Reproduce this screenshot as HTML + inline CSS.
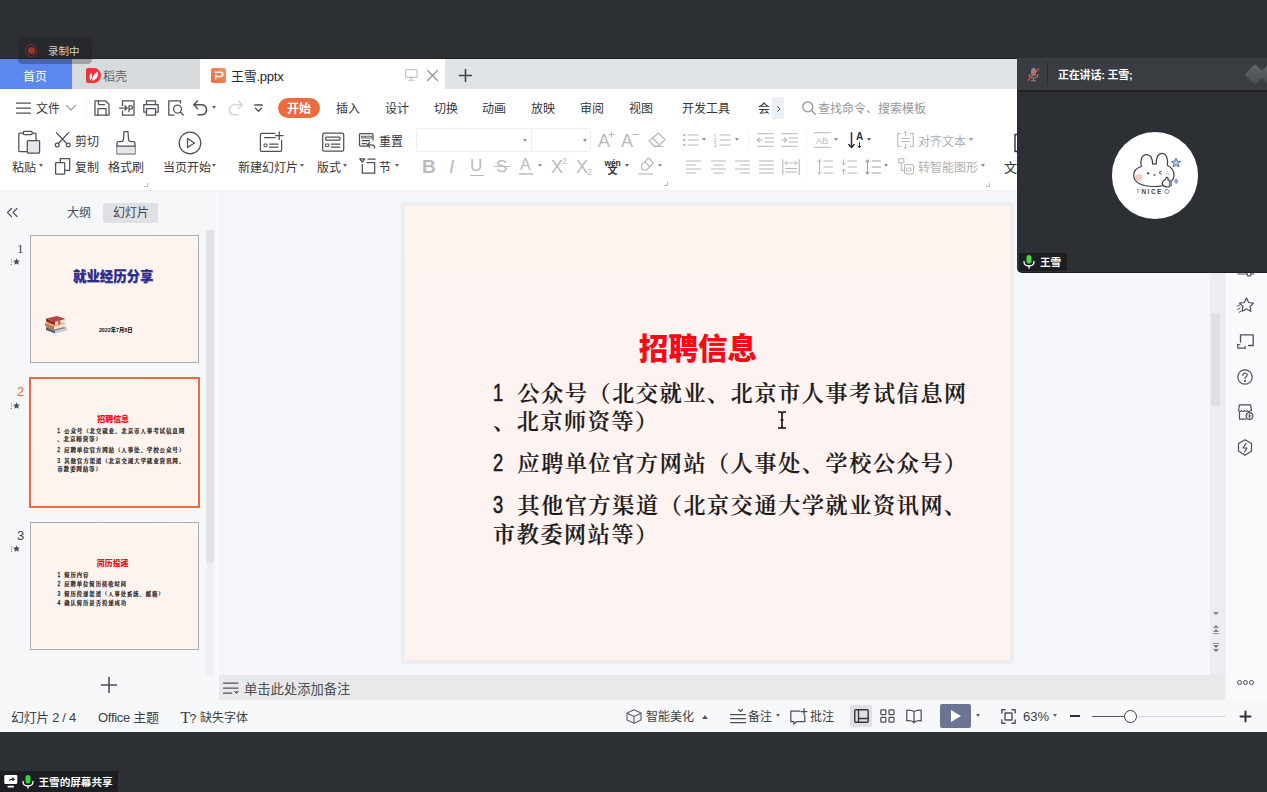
<!DOCTYPE html>
<html lang="zh-CN">
<head>
<meta charset="utf-8">
<title>王雪.pptx</title>
<style>
*{box-sizing:border-box;margin:0;padding:0}
html,body{width:1267px;height:792px;overflow:hidden;background:#2c2f33}
body{position:relative;font-family:"Liberation Sans","Noto Sans CJK SC",sans-serif;font-size:12px;color:#3b3f45}
.a{position:absolute}
.t{position:absolute;white-space:nowrap;line-height:20px;height:20px}
svg{position:absolute;overflow:visible}
.ic{fill:none;stroke:#4d5055;stroke-width:1.25;stroke-linecap:round;stroke-linejoin:round}
.ig{fill:none;stroke:#b6b8bc;stroke-width:1.1;stroke-linecap:round;stroke-linejoin:round}
.g{color:#a9abb0}
.kai{font-family:"Liberation Sans","Noto Serif CJK SC",serif;font-weight:700}
.body .n{display:inline-block;width:24.5px;font-family:"Liberation Sans",sans-serif;font-weight:400;letter-spacing:0;font-size:23.5px;line-height:20px;vertical-align:baseline;-webkit-text-stroke:.6px #1d1a1a;transform:scaleX(.78);transform-origin:0 50%}
.th .n{-webkit-text-stroke:.9px #1d1a1a}
</style>
</head>
<body>

<!-- window base -->
<div class="a" style="left:0;top:59px;width:1267px;height:673px;background:#f6f7fa"></div>
<!-- tab bar -->
<div class="a" style="left:0;top:58px;width:1267px;height:1.500px;background:#222427"></div>
<div class="a" style="left:0;top:59px;width:1267px;height:30px;background:#e1e4e7"></div>
<div class="a" style="left:0;top:59px;width:72px;height:30px;background:#5b87ef"></div>
<div class="a" style="left:72px;top:59px;width:128px;height:30px;background:#d8dbde"></div>
<div class="a" style="left:200px;top:59px;width:245px;height:30px;background:#fff"></div>
<!-- menu + ribbon bg -->
<div class="a" style="left:0;top:89px;width:1267px;height:101px;background:#fff"></div>
<div class="a" style="left:0;top:190px;width:1267px;height:2px;background:linear-gradient(#ecedf0,#f5f6f9)"></div>

<div class="t" style="left:23px;top:66.5px;font-size:12px;color:#fff;">首页</div>
<svg style="left:86px;top:68px" width="15" height="15" viewBox="0 0 15 15"><path d="M2 0h6a7 7.500 0 0 1 0 15h-6a2 2 0 0 1-2-2v-11a2 2 0 0 1 2-2z" fill="#f3303b"/><path d="M4.400 12.600c-1.500-3-.8-5.800.8-7.800c1.300 2.400 1.200 5.200-.8 7.800zM6.200 12.800c-.2-3.800 2-7.400 5.800-9.400c.6 4.600-1.500 8.300-5.800 9.400z" fill="#fff"/></svg>
<div class="t" style="left:103px;top:66.5px;font-size:12px;color:#5d6168;">稻壳</div>
<svg style="left:211px;top:68px" width="15" height="15" viewBox="0 0 15 15"><defs><linearGradient id="pg" x1="0" y1="1" x2="1" y2="0"><stop offset="0" stop-color="#ec6a3a"/><stop offset="1" stop-color="#f39566"/></linearGradient></defs><rect width="15" height="15" rx="2" fill="url(#pg)"/><path d="M3.500 4.200h6.200q2 0 2 2.100t-2 2.100h-5M4.700 6.200v5.300" fill="none" stroke="#fff" stroke-width="1.500"/></svg>
<div class="t" style="left:231px;top:66.5px;font-size:13px;color:#25282c;letter-spacing:-.25px;">王雪.pptx</div>
<svg class="ig" style="left:405px;top:69px;stroke:#b9c3cf" width="13" height="12" viewBox="0 0 13 12"><rect x=".6" y=".6" width="11.500" height="7.800" rx="1"/><path d="M6.300 8.500v2.500M3.500 11.200h5.600"/></svg>
<svg class="ic" style="left:427px;top:70px;stroke:#8d9299;stroke-width:1.200" width="11" height="11" viewBox="0 0 11 11"><path d="M.5 .5l10 10M10.500 .5l-10 10"/></svg>
<svg class="ic" style="left:459px;top:69px;stroke:#3f4247;stroke-width:1.600" width="13" height="13" viewBox="0 0 13 13"><path d="M6.500 .5v12M.5 6.500h12"/></svg>
<svg class="ic" style="left:16px;top:102px" width="15" height="12" viewBox="0 0 15 12"><path d="M.5 1h14M.5 6h14M.5 11h14"/></svg>
<div class="t" style="left:36px;top:99px;font-size:12px;color:#33363b;">文件</div>
<svg class="ic" style="left:66px;top:105px;stroke:#9a9da2;stroke-width:1.100" width="10" height="6" viewBox="0 0 10 6"><path d="M.5 .5l4.500 4.500l4.500-4.500"/></svg>
<div class="a" style="left:86px;top:97px;width:1px;height:22px;background:#f3f4f6"></div>
<svg class="ic" style="left:94px;top:100px" width="16" height="16" viewBox="0 0 16 16"><path d="M1 .8h10.500l3.500 3.500v10.900h-14z"/><path d="M4 15v-6.500h8v6.500M4.500 1v3.500h6"/></svg>
<svg class="ic" style="left:119px;top:100px" width="16" height="16" viewBox="0 0 16 16"><path d="M3.500 5.500v-4.700h11.500v14.400h-11.500v-4"/><path d="M.5 8h7.500M5.800 5.800l2.400 2.200l-2.400 2.200"/><path d="M10 11.800v-6h1.700q1.800 0 1.800 1.700t-1.800 1.700h-1.700"/></svg>
<svg class="ic" style="left:143px;top:100px" width="16" height="16" viewBox="0 0 16 16"><path d="M3.500 4.500v-3.700h9v3.700"/><path d="M3.500 12h-2.700v-7.500h14.400v7.500h-2.700"/><path d="M3.500 8.500h9v6.700h-9z"/></svg>
<svg class="ic" style="left:168px;top:100px" width="16" height="16" viewBox="0 0 16 16"><path d="M12.500 3v-2.200h-11.700v14.400h5.200"/><circle cx="9.500" cy="9" r="4"/><path d="M12.500 12l2.700 3"/></svg>
<svg class="ic" style="left:193px;top:100px;stroke-width:1.500" width="15" height="16" viewBox="0 0 15 16"><path d="M4.500 1l-3.700 3.800l3.700 3.800"/><path d="M1.500 4.800h6.500q5.500 0 5.500 5t-5.500 5h-3"/></svg>
<div class="a" style="left:211.5px;top:106px;width:0;height:0;border-left:2.5px solid transparent;border-right:2.5px solid transparent;border-top:3px solid #62656a"></div>
<svg class="ig" style="left:228px;top:100px;stroke:#c4c6ca" width="15" height="16" viewBox="0 0 15 16"><path d="M10.500 1l3.700 3.800l-3.700 3.800"/><path d="M13.500 4.800h-6.500q-5.500 0-5.500 5t5.500 5h3"/></svg>
<svg class="ic" style="left:253.5px;top:103.5px;stroke-width:1.300" width="9" height="9" viewBox="0 0 9 9"><path d="M.8 1h7.400M1.500 4.300l3 3l3-3"/></svg>
<div class="a" style="left:270px;top:97px;width:1px;height:22px;background:#f3f4f6"></div>
<div class="a" style="left:278px;top:98px;width:42px;height:20px;border-radius:10px;background:#ec6b3f"></div>
<div class="t" style="left:287px;top:99px;font-size:12px;color:#fff;font-weight:700;">开始</div>
<div class="t" style="left:336px;top:99px;font-size:12px;color:#33363b;">插入</div>
<div class="t" style="left:385px;top:99px;font-size:12px;color:#33363b;">设计</div>
<div class="t" style="left:434px;top:99px;font-size:12px;color:#33363b;">切换</div>
<div class="t" style="left:482px;top:99px;font-size:12px;color:#33363b;">动画</div>
<div class="t" style="left:531px;top:99px;font-size:12px;color:#33363b;">放映</div>
<div class="t" style="left:580px;top:99px;font-size:12px;color:#33363b;">审阅</div>
<div class="t" style="left:629px;top:99px;font-size:12px;color:#33363b;">视图</div>
<div class="t" style="left:682px;top:99px;font-size:12px;color:#33363b;">开发工具</div>
<div class="t" style="left:758px;top:99px;font-size:12px;color:#33363b;">会</div>
<div class="a" style="left:772px;top:97px;width:12px;height:22px;background:#eeeff2"></div>
<svg class="ic" style="left:776.5px;top:105.5px;stroke-width:1" width="3" height="6" viewBox="0 0 3 6"><path d="M.5 .5l2.500 2.500l-2.500 2.500"/></svg>
<svg class="ic" style="left:802px;top:101px;stroke:#8b8e94;stroke-width:1.200" width="14" height="14" viewBox="0 0 14 14"><circle cx="5.800" cy="5.800" r="5"/><path d="M9.500 9.500l3.800 3.800"/></svg>
<div class="t" style="left:818px;top:99px;font-size:12px;color:#94979d;">查找命令、搜索模板</div>
<svg class="ic" style="left:18px;top:129px" width="23" height="26" viewBox="0 0 23 26"><path d="M5.300 4h-3.500q-1 0-1 1v16.500q0 1 1 1h7"/><path d="M14.200 4h2.800q1 0 1 1v6"/><rect x="5.300" y="2.400" width="8.900" height="3.200" rx="1" fill="#fff"/><rect x="9.300" y="11.500" width="12.300" height="12.700" rx="1" fill="#e6e7ea"/></svg>
<div class="t" style="left:12px;top:158px;font-size:12px;color:#33363b;">粘贴</div>
<div class="a" style="left:39px;top:163.5px;width:0;height:0;border-left:2.5px solid transparent;border-right:2.5px solid transparent;border-top:3px solid #62656a"></div>
<svg class="ic" style="left:54px;top:131px" width="18" height="17" viewBox="0 0 18 17"><path d="M2.400 1.600l10.200 10.900M14.600 1.600l-10.200 10.900"/><circle cx="3.200" cy="14" r="1.900"/><circle cx="14.300" cy="14" r="1.900"/></svg>
<div class="t" style="left:75px;top:132px;font-size:12px;color:#33363b;">剪切</div>
<svg class="ic" style="left:55px;top:158px" width="16" height="17" viewBox="0 0 16 17"><path d="M5.300 4.600v-3.900h9.400v11.600h-5"/><rect x=".6" y="4.600" width="9.100" height="11.600" rx=".8" fill="#fff"/></svg>
<div class="t" style="left:75px;top:158px;font-size:12px;color:#33363b;">复制</div>
<svg class="ic" style="left:116px;top:131px" width="20" height="24" viewBox="0 0 20 24"><path d="M8 .7h4l.5 7.500q.2 2.400 2.500 2.400h2.400q1.600 0 1.600 1.600v10.600h-18v-10.600q0-1.600 1.600-1.600h2.400q2.300 0 2.500-2.400z"/><path d="M1.200 15h17.600v7.500h-17.600z" fill="#e6e7ea" stroke="none"/><path d="M1 15h18"/></svg>
<div class="t" style="left:108px;top:158px;font-size:12px;color:#33363b;">格式刷</div>
<svg class="ig" style="left:144px;top:183px;stroke-width:1" width="4" height="4" viewBox="0 0 4 4"><path d="M3.500 .5v3h-3"/></svg>
<svg class="ic" style="left:178px;top:131px" width="24" height="24" viewBox="0 0 24 24"><circle cx="12" cy="12" r="10.800"/><path d="M9.500 7.500v9l7-4.500z"/></svg>
<div class="t" style="left:163px;top:158px;font-size:12px;color:#33363b;">当页开始</div>
<div class="a" style="left:212px;top:163.5px;width:0;height:0;border-left:2.5px solid transparent;border-right:2.5px solid transparent;border-top:3px solid #62656a"></div>
<svg class="ic" style="left:260px;top:131px" width="25" height="21" viewBox="0 0 25 21"><path d="M15 2.300h-13.600q-1 0-1 1v16q0 1 1 1h19.200q1 0 1-1v-10"/><path d="M4.500 6.600h10.500M9.600 13h8.400M9.600 16.200h8.400"/><rect x="4.500" y="13" width="2.500" height="2.700" stroke-width="1"/><path d="M19.300 .9v7.600M15.500 4.700h7.600"/></svg>
<div class="t" style="left:238px;top:158px;font-size:12px;color:#33363b;">新建幻灯片</div>
<div class="a" style="left:299.5px;top:163.5px;width:0;height:0;border-left:2.5px solid transparent;border-right:2.5px solid transparent;border-top:3px solid #62656a"></div>
<svg class="ic" style="left:322px;top:132px" width="23" height="20" viewBox="0 0 23 20"><rect x=".7" y="1.200" width="21" height="18" rx="1.500"/><rect x="3.800" y="5" width="14.100" height="3.200" rx=".6"/><rect x="3.800" y="12" width="3" height="2.700" stroke-width="1"/><path d="M9.400 12h8.500M9.400 15.200h8.500"/></svg>
<div class="t" style="left:317px;top:158px;font-size:12px;color:#33363b;">版式</div>
<div class="a" style="left:343px;top:163.5px;width:0;height:0;border-left:2.5px solid transparent;border-right:2.5px solid transparent;border-top:3px solid #62656a"></div>
<svg class="ic" style="left:359px;top:133px" width="17" height="16" viewBox="0 0 17 16"><path d="M8.500 13h-7q-1 0-1-1v-10.500q0-1 1-1h11.500q1 0 1 1v5.500"/><rect x="3" y="3.200" width="2.300" height="1.800" stroke-width=".9"/><rect x="6.800" y="3.200" width="6" height="1.800" stroke-width=".9"/><path d="M3 7.600h7.500M3 10.500h4.300"/><path d="M8.500 11.800h4q3.200 0 3.200 3.200M10.800 9.400l-2.500 2.400l2.500 2.400"/></svg>
<div class="t" style="left:379px;top:132px;font-size:12px;color:#33363b;">重置</div>
<svg class="ic" style="left:359px;top:158px" width="17" height="16" viewBox="0 0 17 16"><path d="M.8 .8h5l-2.500 3.200z"/><path d="M3.300 6.500v8.700h12.400v-10.700h-7.700"/><path d="M9 1.200h7"/></svg>
<div class="t" style="left:379px;top:158px;font-size:12px;color:#33363b;">节</div>
<div class="a" style="left:394.5px;top:163.5px;width:0;height:0;border-left:2.5px solid transparent;border-right:2.5px solid transparent;border-top:3px solid #62656a"></div>
<div class="a" style="left:416px;top:128px;width:175px;height:24px;border:1px solid #eceef2;border-radius:2px"></div>
<div class="a" style="left:531px;top:128px;width:1px;height:24px;background:#eceef2"></div>
<div class="a" style="left:523px;top:139px;width:0;height:0;border-left:2.5px solid transparent;border-right:2.5px solid transparent;border-top:3px solid #8d9095"></div>
<div class="a" style="left:583px;top:139px;width:0;height:0;border-left:2.5px solid transparent;border-right:2.5px solid transparent;border-top:3px solid #8d9095"></div>
<div class="t" style="left:598px;top:131px;font-size:18px;color:#b9bbbf;font-weight:400;">A</div>
<svg class="ig" style="left:609px;top:132px;stroke-width:1" width="5" height="5" viewBox="0 0 5 5"><path d="M2.500 0v5M0 2.500h5"/></svg>
<div class="t" style="left:621px;top:131px;font-size:18px;color:#b9bbbf;">A</div>
<svg class="ig" style="left:633px;top:132px;stroke-width:1" width="5" height="5" viewBox="0 0 5 5"><path d="M0 2.500h5"/></svg>
<svg class="ig" style="left:648px;top:132px" width="18" height="16" viewBox="0 0 18 16"><path d="M10.500 1l6.500 6.500l-6.500 6.500h-4.500l-5-5z"/><path d="M4.500 6l6 6M6 14.500h9"/></svg>
<div class="t" style="left:422px;top:157px;font-size:19px;color:#b9bbbf;font-weight:700;">B</div>
<div class="t" style="left:449px;top:157px;font-size:19px;color:#b9bbbf;font-style:italic;">I</div>
<div class="t" style="left:470px;top:156px;font-size:17px;color:#b9bbbf;">U</div>
<div class="a" style="left:470px;top:175px;width:14px;height:1px;background:#b7b9bd"></div>
<svg class="ig" style="left:496px;top:159px;display:none" width="13" height="15" viewBox="0 0 13 15"><path d="M12 1h-8q-3 0-3 3t3 3h8.500M1 14h8q3 0 3-3t-3-3"/></svg>
<div class="t" style="left:496px;top:157px;font-size:17px;color:#b9bbbf;">S</div>
<div class="a" style="left:494px;top:166px;width:16px;height:1px;background:#b7b9bd"></div>
<div class="t" style="left:520px;top:155px;font-size:16px;color:#b9bbbf;">A</div>
<div class="a" style="left:519px;top:173px;width:14px;height:2px;background:#c9cbce"></div>
<div class="a" style="left:537.5px;top:164px;width:0;height:0;border-left:2.5px solid transparent;border-right:2.5px solid transparent;border-top:3px solid #8d9095"></div>
<div class="t" style="left:551px;top:157px;font-size:18px;color:#b9bbbf;">X</div>
<div class="t" style="left:562px;top:151px;font-size:9px;color:#b9bbbf;">2</div>
<div class="t" style="left:576px;top:157px;font-size:18px;color:#b9bbbf;">X</div>
<div class="t" style="left:587px;top:162px;font-size:9px;color:#b9bbbf;">2</div>
<div class="t" style="left:604.5px;top:153px;font-size:8.5px;color:#2e3136;font-weight:700;letter-spacing:-.2px;">wén</div>
<div class="t" style="left:607.5px;top:161px;font-size:10px;color:#2e3136;font-weight:700;">文</div>
<div class="a" style="left:624.5px;top:164px;width:0;height:0;border-left:2.5px solid transparent;border-right:2.5px solid transparent;border-top:3px solid #62656a"></div>
<svg class="ig" style="left:639px;top:157px" width="16" height="18" viewBox="0 0 16 18"><path d="M9.500 1l5 5l-7 7h-3.500l-1.500-1.500v-3.500z"/><path d="M6 5l4.500 4.500"/></svg>
<div class="a" style="left:638px;top:173px;width:15px;height:2px;background:#d4d5d8"></div>
<div class="a" style="left:657.5px;top:164px;width:0;height:0;border-left:2.5px solid transparent;border-right:2.5px solid transparent;border-top:3px solid #8d9095"></div>
<svg class="ig" style="left:664px;top:182px;stroke-width:1" width="4" height="4" viewBox="0 0 4 4"><path d="M3.500 .5v3h-3"/></svg>
<svg class="ig" style="left:683px;top:133px" width="16" height="14" viewBox="0 0 16 14"><path d="M5 2h10.500M5 7h10.500M5 12h10.500"/><circle cx="1.300" cy="2" r=".8"/><circle cx="1.300" cy="7" r=".8"/><circle cx="1.300" cy="12" r=".8"/></svg>
<div class="a" style="left:701.5px;top:138px;width:0;height:0;border-left:2.5px solid transparent;border-right:2.5px solid transparent;border-top:3px solid #8d9095"></div>
<svg class="ig" style="left:714px;top:133px" width="17" height="14" viewBox="0 0 17 14"><path d="M6 2h10.500M6 7h10.500M6 12h10.500"/><path d="M1 .5v3M.5 6h1.500l-1.500 2.500h1.500M.5 10.500h1.500v3h-1.500" stroke-width=".8"/></svg>
<div class="a" style="left:734.5px;top:138px;width:0;height:0;border-left:2.5px solid transparent;border-right:2.5px solid transparent;border-top:3px solid #8d9095"></div>
<div class="a" style="left:748px;top:130px;width:1px;height:20px;background:#f1f2f4"></div>
<svg class="ig" style="left:757px;top:133px" width="17" height="14" viewBox="0 0 17 14"><path d="M.5 .8h16M8 5h8.500M8 9h8.500M.5 13.200h16"/><path d="M5.500 7h-5M2.500 5l-2 2l2 2"/></svg>
<svg class="ig" style="left:781px;top:133px" width="17" height="14" viewBox="0 0 17 14"><path d="M.5 .8h16M8 5h8.500M8 9h8.500M.5 13.200h16"/><path d="M.5 7h5M3.500 5l2 2l-2 2"/></svg>
<div class="a" style="left:806px;top:130px;width:1px;height:20px;background:#f1f2f4"></div>
<svg class="ig" style="left:814px;top:132px" width="17" height="16" viewBox="0 0 17 16"><path d="M.5 .8h16M.5 15.200h16"/></svg>
<div class="t" style="left:816px;top:130.5px;font-size:9px;color:#b9bbbf;">AB</div>
<div class="a" style="left:833.5px;top:138px;width:0;height:0;border-left:2.5px solid transparent;border-right:2.5px solid transparent;border-top:3px solid #8d9095"></div>
<svg class="ic" style="left:848px;top:132px;stroke:#2e3136;stroke-width:1.500" width="15" height="17" viewBox="0 0 15 17"><path d="M3.500 .8v14.500M.8 12.500l2.700 3l2.700-3"/><path d="M11.500 10.500v5M10 14l1.500 1.800l1.500-1.800" stroke-width="1"/></svg>
<div class="t" style="left:856px;top:127px;font-size:10px;color:#2e3136;font-weight:700;">A</div>
<div class="a" style="left:866.5px;top:138px;width:0;height:0;border-left:2.5px solid transparent;border-right:2.5px solid transparent;border-top:3px solid #62656a"></div>
<svg class="ig" style="left:897px;top:131px" width="17" height="18" viewBox="0 0 17 18"><path d="M3.500 2.500h-2.700v13h2.700M13.500 2.500h2.700v13h-2.700"/><path d="M4.500 7.500h8M4.500 10.500h8"/><path d="M8.500 .5v4.500M7 2l1.500-1.500l1.500 1.500M8.500 17.500v-4.500M7 16l1.500 1.500l1.500-1.500" stroke-width=".9"/></svg>
<div class="t" style="left:918px;top:132px;font-size:12px;color:#aeb0b4;">对齐文本</div>
<div class="a" style="left:968.5px;top:138px;width:0;height:0;border-left:2.5px solid transparent;border-right:2.5px solid transparent;border-top:3px solid #8d9095"></div>
<svg class="ig" style="left:686px;top:160px" width="15" height="14" viewBox="0 0 15 14"><path d="M.5 1h14M.5 5h9M.5 9h14M.5 13h9"/></svg>
<svg class="ig" style="left:711px;top:160px" width="15" height="14" viewBox="0 0 15 14"><path d="M.5 1h14M3 5h9M.5 9h14M3 13h9"/></svg>
<svg class="ig" style="left:735px;top:160px" width="15" height="14" viewBox="0 0 15 14"><path d="M.5 1h14M5.500 5h9M.5 9h14M5.500 13h9"/></svg>
<svg class="ig" style="left:759px;top:160px" width="15" height="14" viewBox="0 0 15 14"><path d="M.5 1h14M.5 5h14M.5 9h14M.5 13h14"/></svg>
<svg class="ig" style="left:782px;top:159px" width="18" height="16" viewBox="0 0 18 16"><path d="M.8 .5v15M17.200 .5v15M3.500 9.500h11M3.500 13h11"/><path d="M3 4h12M5 2l-2 2l2 2M13 2l2 2l-2 2" stroke-width=".9"/></svg>
<div class="a" style="left:806px;top:157px;width:1px;height:20px;background:#f1f2f4"></div>
<svg class="ig" style="left:817px;top:159px" width="16" height="16" viewBox="0 0 16 16"><path d="M7 2h8.500M7 8h8.500M7 14h8.500"/><path d="M2.500 .8v14.400M.8 2.800l1.700-2l1.700 2M.8 13.200l1.700 2l1.700-2" stroke-width="1"/></svg>
<svg class="ig" style="left:841px;top:159px" width="16" height="16" viewBox="0 0 16 16"><path d="M7 2h8.500M7 8h8.500M7 14h8.500"/><path d="M2.500 .8v5M.8 4l1.700 2l1.700-2M2.500 15.200v-5M.8 12l1.700-2l1.700 2" stroke-width="1"/></svg>
<svg class="ig" style="left:865px;top:159px;stroke:#9fa2a7" width="16" height="16" viewBox="0 0 16 16"><path d="M7 2h8.500M7 8h8.500M7 14h8.500"/><path d="M2.500 .8v14.400M.8 2.800l1.700-2l1.700 2M.8 13.200l1.700 2l1.700-2" stroke-width="1.100"/></svg>
<div class="a" style="left:883.5px;top:164px;width:0;height:0;border-left:2.5px solid transparent;border-right:2.5px solid transparent;border-top:3px solid #8d9095"></div>
<svg class="ig" style="left:898px;top:158px" width="16" height="17" viewBox="0 0 16 17"><path d="M.8 .8h5v4h-5zM3.300 5v7.500h2.500"/><rect x="6.500" y="6.500" width="9" height="9.500" rx="1.500"/><path d="M9 10h4v3h-4z" stroke-width=".9"/></svg>
<div class="t" style="left:918px;top:158px;font-size:12px;color:#aeb0b4;">转智能图形</div>
<div class="a" style="left:980.5px;top:164px;width:0;height:0;border-left:2.5px solid transparent;border-right:2.5px solid transparent;border-top:3px solid #8d9095"></div>
<div class="t" style="left:1004px;top:158px;font-size:13px;color:#2e3136;">文</div>
<svg class="ic" style="left:1013.5px;top:133.5px;stroke:#2e3136;stroke-width:1.400" width="4" height="18" viewBox="0 0 4 18"><path d="M3.500 .5h-2.500v17h2.500"/></svg>
<svg class="ig" style="left:986px;top:183px;stroke-width:1" width="4" height="4" viewBox="0 0 4 4"><path d="M3.500 .5v3h-3"/></svg>
<!-- left panel -->
<div class="a" style="left:0;top:192px;width:218px;height:508px;background:#f6f7f9"></div>
<div class="a" style="left:217px;top:192px;width:1px;height:508px;background:#fdfdfe"></div>
<svg class="ic" style="left:7px;top:208px;stroke-width:1.200" width="11" height="9" viewBox="0 0 11 9"><path d="M4.500 .5l-4 4l4 4M10 .5l-4 4l4 4"/></svg>
<div class="t" style="left:67px;top:203px;font-size:12px;color:#4a4d52;">大纲</div>
<div class="a" style="left:103px;top:203px;width:55px;height:20px;background:#dfe1e5;border-radius:2px"></div>
<div class="t" style="left:113px;top:203px;font-size:12px;color:#3f4247;">幻灯片</div>
<div class="a" style="left:206px;top:230px;width:8px;height:446px;background:#eff0f3"></div>
<div class="a" style="left:206px;top:230px;width:8px;height:333px;background:#e2e3e7;border-radius:2px"></div>
<div class="t" style="left:17px;top:239px;font-size:13px;color:#3f4247;font-family:'Liberation Serif',serif;">1</div>
<div class="t" style="left:17px;top:382px;font-size:13px;color:#e8693f;">2</div>
<div class="t" style="left:17px;top:526px;font-size:13px;color:#3f4247;">3</div>
<svg style="left:11px;top:258px" width="9" height="8" viewBox="0 0 9 8"><path d="M5.500 .3l1 2.300l2.400.2l-1.800 1.600l.6 2.400l-2.200-1.300l-2.200 1.300l.6-2.400l-1.800-1.600l2.400-.2z" fill="#4a4d52"/><path d="M.5 1.500v1M.5 3.800v1M.5 6v1" stroke="#4a4d52" stroke-width=".8"/></svg>
<svg style="left:11px;top:402px" width="9" height="8" viewBox="0 0 9 8"><path d="M5.500 .3l1 2.300l2.400.2l-1.800 1.600l.6 2.400l-2.200-1.300l-2.200 1.300l.6-2.400l-1.800-1.600l2.400-.2z" fill="#4a4d52"/><path d="M.5 1.500v1M.5 3.800v1M.5 6v1" stroke="#4a4d52" stroke-width=".8"/></svg>
<svg style="left:11px;top:545px" width="9" height="8" viewBox="0 0 9 8"><path d="M5.500 .3l1 2.300l2.400.2l-1.800 1.600l.6 2.400l-2.200-1.300l-2.200 1.300l.6-2.400l-1.800-1.600l2.400-.2z" fill="#4a4d52"/><path d="M.5 1.500v1M.5 3.800v1M.5 6v1" stroke="#4a4d52" stroke-width=".8"/></svg>
<div class="a" style="left:30px;top:235px;width:169px;height:128px;border:1px solid #aaaeb4;background:linear-gradient(160deg,#fff7ee,#fdf4f0 40%);overflow:hidden"><div style="position:absolute;left:0;top:0;width:605px;height:454px;transform:scale(0.2786);transform-origin:0 0"><div style="position:absolute;left:0;top:112px;width:590px;text-align:center;font-size:48px;line-height:70px;font-weight:900;color:#2b2b8e;text-shadow:2px 2px 2px rgba(60,60,120,.45)">就业经历分享</div><div style="position:absolute;left:204px;top:322px;width:200px;text-align:center;font-size:19px;line-height:30px;font-weight:900;color:#111">2022年7月8日</div></div></div>
<svg style="left:43px;top:315px" width="26" height="19" viewBox="0 0 26 19"><path d="M3 12l12-2l9 3l-12 3z" fill="#7f8790"/><path d="M3 12v3l9 3.500v-2.500z" fill="#596069"/><path d="M12 16l12-3v2.500l-12 3z" fill="#c9ccd0"/><path d="M2 8l12-2.500l9 3l-12 3z" fill="#e9a25a"/><path d="M2 8v3l9 3.500v-3z" fill="#c47b3a"/><path d="M11 11.500l12-3v3l-12 3z" fill="#f3e3c8"/><path d="M3 3.500l11-2.500l9 3l-11 3z" fill="#b8463f"/><path d="M3 3.500v3.200l9 3.300v-3z" fill="#8e2f2b"/><path d="M12 7l11-3v3l-11 3z" fill="#f0e6d8"/><path d="M15 6.200l2.500-.7v4l-1.200-.8l-1.300 1.500z" fill="#e04a4a"/></svg>
<div class="a" style="left:29px;top:377px;width:171px;height:131px;border:2px solid #ee6a3f;background:linear-gradient(160deg,#fff7ee,#fdf4f0 40%);overflow:hidden"><div style="position:absolute;left:0;top:0;width:605px;height:454px;transform:scale(0.2786);transform-origin:0 0"><div style="position:absolute;left:2px;top:3px"><div style="position:absolute;left:193px;top:122px;width:200px;height:40px;line-height:40px;text-align:center;font-size:28.500px;font-weight:900;color:#f50b16">招聘信息</div><div class="kai body th" style="position:absolute;left:92px;top:170px;color:#1d1a1a;font-size:20px;letter-spacing:2.870px;line-height:28.5px;white-space:nowrap;-webkit-text-stroke:.6px #1d1a1a"><div><span class="n">1</span>公众号（北交就业、北京市人事考试信息网</div><div>、北京师资等）</div><div style="margin-top:11px"><span class="n">2</span>应聘单位官方网站（人事处、学校公众号）</div><div style="margin-top:11px"><span class="n">3</span>其他官方渠道（北京交通大学就业资讯网、</div><div>市教委网站等）</div></div></div></div></div>
<div class="a" style="left:30px;top:522px;width:169px;height:128px;border:1px solid #aaaeb4;background:linear-gradient(160deg,#fff7ee,#fdf4f0 40%);overflow:hidden"><div style="position:absolute;left:0;top:0;width:605px;height:454px;transform:scale(0.2786);transform-origin:0 0"><div style="position:absolute;left:193px;top:126px;width:200px;height:40px;line-height:40px;text-align:center;font-size:28.500px;font-weight:900;color:#f50b16">简历投递</div><div class="kai body th" style="position:absolute;left:95px;top:170px;color:#1d1a1a;font-size:19px;letter-spacing:3.500px;line-height:34px;white-space:nowrap;-webkit-text-stroke:.6px #1d1a1a"><div><span class="n">1</span>简历内容</div><div><span class="n">2</span>应聘单位简历接收时间</div><div><span class="n">3</span>简历投递渠道（人事处系统、邮箱）</div><div><span class="n">4</span>确认简历是否投递成功</div></div></div></div>
<svg class="ic" style="left:101px;top:676.5px;stroke-width:1.600" width="16" height="16" viewBox="0 0 16 16"><path d="M8 .5v15M.5 8h15"/></svg>

<!-- main slide -->
<div class="a" style="left:402px;top:203px;width:611px;height:460px;background:linear-gradient(#fef6ef,#fdf4f1 15%);border:3px solid #ededee;box-shadow:0 0 2px rgba(0,0,0,.12)"></div>
<div class="t" style="left:598px;top:328.5px;width:200px;height:40px;line-height:40px;text-align:center;font-size:29.6px;font-weight:900;color:#f50b16">招聘信息</div>
<div class="kai body" style="font-weight:600;position:absolute;left:493px;top:379.5px;width:500px;color:#1d1a1a;font-size:22px;letter-spacing:1.7px;-webkit-text-stroke:.2px #1d1a1a;line-height:28.6px;white-space:nowrap">
<div><span class="n">1</span>公众号（北交就业、北京市人事考试信息网</div>
<div>、北京师资等）</div>
<div style="margin-top:13.4px"><span class="n">2</span>应聘单位官方网站（人事处、学校公众号）</div>
<div style="margin-top:13.4px"><span class="n">3</span>其他官方渠道（北京交通大学就业资讯网、</div>
<div>市教委网站等）</div>
</div>
<svg style="left:777px;top:410.500px" width="10" height="18" viewBox="0 0 10 18"><path d="M1 1h2.500q1.500 0 1.500 1.500v13q0 1.500-1.500 1.500h-2.500M9 1h-2.500q-1.500 0-1.500 1.500v13q0 1.500 1.500 1.500h2.500M3.500 9h3" fill="none" stroke="#111" stroke-width="1.600"/></svg>

<!-- notes bar -->
<div class="a" style="left:219px;top:675px;width:1006px;height:25px;background:#e8e9eb"></div>
<svg class="ic" style="left:223px;top:682px" width="16" height="12" viewBox="0 0 16 12"><path d="M.5 1h14.500M.5 6h14.500M.5 11h8"/><path d="M11.500 9.500l2 2l2-2" fill="#4a4d52" stroke-width=".8"/></svg>
<div class="t" style="left:244px;top:680px;font-size:13.3px;color:#4a4d52;">单击此处添加备注</div>
<div class="a" style="left:1210px;top:192px;width:15px;height:483px;background:#ecedf0"></div>
<div class="a" style="left:1211px;top:313px;width:9px;height:93px;background:#dfe0e4;border-radius:3px"></div>
<div class="a" style="left:1213px;top:612px;width:0;height:0;border-left:3px solid transparent;border-right:3px solid transparent;border-top:3px solid #7d8086"></div>
<svg style="left:1212px;top:625px" width="8" height="9" viewBox="0 0 8 9"><path d="M4 0l3 3h-6zM4 4l3 3h-6z" fill="#7d8086"/><path d="M1 8.500h6" stroke="#7d8086" stroke-width=".8"/></svg>
<svg style="left:1212px;top:643px" width="8" height="9" viewBox="0 0 8 9"><path d="M4 9l3-3h-6zM4 5l3-3h-6z" fill="#7d8086"/><path d="M1 .5h6" stroke="#7d8086" stroke-width=".8"/></svg>
<div class="a" style="left:1225px;top:190px;width:42px;height:510px;background:#f9fafb"></div>
<div class="a" style="left:1225px;top:190px;width:1px;height:510px;background:#f0f1f3"></div>
<svg class="ic" style="left:1238px;top:270.8px;stroke-width:1.100" width="16" height="6" viewBox="0 0 16 6"><path d="M0 3h9M13 3h3"/><circle cx="11" cy="3" r="2"/></svg>
<svg class="ic" style="left:1237px;top:297px;stroke-width:1.200" width="17" height="16" viewBox="0 0 17 16"><path d="M9.500 1l2.200 4.500l4.800.6l-3.500 3.400l.9 4.800l-4.400-2.300l-4.400 2.300l.9-4.800l-3.500-3.400l4.800-.6z"/><path d="M.5 9l2-1M.5 12.500l2.500-1.500M2 15.500l2-1.500" stroke-width="1"/></svg>
<svg class="ic" style="left:1237px;top:334px;stroke-width:1.300" width="17" height="15" viewBox="0 0 17 15"><path d="M3.500 8v-7.200h12.700v10.700h-4.700"/><path d="M.8 10.500v3.700h7.200"/><path d="M3 10.800l-2.200-.3M8 12l.3 2.200" stroke-width="1"/></svg>
<svg class="ic" style="left:1237px;top:369px;stroke-width:1.200" width="16" height="16" viewBox="0 0 16 16"><circle cx="8" cy="8" r="7.200"/><path d="M5.800 6.300q0-2.300 2.200-2.300t2.200 2q0 1.200-1.200 1.800t-1 1.700"/><circle cx="8" cy="12" r=".5" fill="#4a4d52"/></svg>
<svg class="ic" style="left:1237px;top:404px;stroke-width:1.200" width="17" height="16" viewBox="0 0 17 16"><path d="M1.500 6.500l1-5.700h11l1 5.700"/><path d="M1.500 6.500q1.500 2 3 0q1.500 2 3 0q1.500 2 3 0q1.500 2 3 0"/><path d="M2.500 8v7.200h6"/><circle cx="12.500" cy="12" r="3.300"/><path d="M12.500 10v4M11 11.500l1.500 1.500l1.500-1.500" stroke-width=".9"/></svg>
<svg class="ic" style="left:1237px;top:439px;stroke-width:1.200" width="16" height="17" viewBox="0 0 16 17"><path d="M8 .8l6.500 3.700v7.500l-6.500 4.200l-6.500-4.200v-7.500z"/><path d="M9 4.500l-3 4.500h4l-2.500 4"/></svg>
<div class="a" style="left:1237px;top:680px;width:5px;height:5px;border:1.200px solid #4a4d52;border-radius:50%"></div>
<div class="a" style="left:1243px;top:680px;width:5px;height:5px;border:1.200px solid #4a4d52;border-radius:50%"></div>
<div class="a" style="left:1249px;top:680px;width:5px;height:5px;border:1.200px solid #4a4d52;border-radius:50%"></div>
<div class="a" style="left:0;top:700px;width:1267px;height:32px;background:#f7f8fa"></div>
<div class="t" style="left:11px;top:708px;font-size:13px;color:#3b3f45;letter-spacing:-.35px;">幻灯片 2 / 4</div>
<div class="t" style="left:98px;top:708px;font-size:13px;color:#3b3f45;letter-spacing:-.3px;">Office 主题</div>
<div class="t" style="left:180.5px;top:707.5px;font-size:16px;color:#3b3f45;font-family:'Liberation Serif',serif;">T</div>
<div class="t" style="left:189.5px;top:709px;font-size:12.5px;color:#3b3f45;">?</div>
<div class="t" style="left:200px;top:708px;font-size:12px;color:#3b3f45;">缺失字体</div>
<svg class="ic" style="left:626px;top:709px;stroke-width:1.100;stroke:#5a5d63" width="16" height="15" viewBox="0 0 16 15"><path d="M8 .8l7 3.200v7l-7 3.200l-7-3.200v-7z"/><path d="M1.500 4.500l6.500 3l6.500-3M8 7.500v6"/></svg>
<div class="t" style="left:646px;top:707px;font-size:12px;color:#3b3f45;">智能美化</div>
<div class="a" style="left:702px;top:715px;width:0;height:0;border-left:3px solid transparent;border-right:3px solid transparent;border-bottom:4px solid #55585d"></div>
<svg class="ic" style="left:730px;top:709px" width="16" height="14" viewBox="0 0 16 14"><path d="M.5 5.500h15M.5 9.500h15M.5 13.500h15"/><path d="M8.500 .5l2 2l2-2" stroke-width="1.100"/></svg>
<div class="t" style="left:748px;top:707px;font-size:12px;color:#3b3f45;">备注</div>
<div class="a" style="left:775.5px;top:714px;width:0;height:0;border-left:2.5px solid transparent;border-right:2.5px solid transparent;border-top:3px solid #62656a"></div>
<svg class="ic" style="left:790px;top:708px" width="17" height="16" viewBox="0 0 17 16"><path d="M10 3h-9.200v10.500h3v2.500l3-2.500h8v-6"/><path d="M14 .5v6M11 3.500h6"/></svg>
<div class="t" style="left:810px;top:707px;font-size:12px;color:#3b3f45;">批注</div>
<div class="a" style="left:850px;top:705px;width:22px;height:22px;background:#dfe0e3;border-radius:2px"></div>
<svg class="ic" style="left:854px;top:709px;stroke-width:1.400;stroke:#33363b" width="15" height="14" viewBox="0 0 15 14"><rect x=".8" y=".8" width="13.400" height="12.400" rx="1"/><path d="M4.500 1v12M4.500 9.500h9.500"/></svg>
<svg class="ic" style="left:880px;top:709px" width="15" height="14" viewBox="0 0 15 14"><rect x=".8" y=".8" width="5" height="4.800" rx=".8"/><rect x="9" y=".8" width="5" height="4.800" rx=".8"/><rect x=".8" y="8.400" width="5" height="4.800" rx=".8"/><rect x="9" y="8.400" width="5" height="4.800" rx=".8"/></svg>
<svg class="ic" style="left:906px;top:709px" width="16" height="15" viewBox="0 0 16 15"><path d="M8 2.500q-3.500-2-7.200-1.200v10.500q3.700-.8 7.200 1.200q3.500-2 7.200-1.200v-10.500q-3.700-.8-7.200 1.200zM8 2.500v10.500"/><path d="M6.800 12.800l1.200 1.500l1.200-1.500" stroke-width="1"/></svg>
<div class="a" style="left:940px;top:704px;width:31px;height:24px;background:#6d7392;border-radius:2px"></div>
<svg style="left:950px;top:709px" width="12" height="14" viewBox="0 0 12 14"><path d="M1 1v12l10-6z" fill="#fff"/></svg>
<div class="a" style="left:975.5px;top:714px;width:0;height:0;border-left:2.5px solid transparent;border-right:2.5px solid transparent;border-top:3px solid #62656a"></div>
<svg class="ic" style="left:1001px;top:709px;stroke-width:1.400" width="15" height="15" viewBox="0 0 15 15"><path d="M.8 4v-3.200h3.200M11 .8h3.200v3.200M14.200 11v3.200h-3.200M4 14.200h-3.200v-3.200"/><rect x="4" y="4" width="7" height="7"/></svg>
<div class="t" style="left:1023px;top:707px;font-size:13px;color:#3b3f45;">63%</div>
<div class="a" style="left:1052.5px;top:714px;width:0;height:0;border-left:2.5px solid transparent;border-right:2.5px solid transparent;border-top:3px solid #62656a"></div>
<div class="a" style="left:1070px;top:715px;width:10px;height:2px;background:#2e3136"></div>
<div class="a" style="left:1092px;top:716px;width:134px;height:1px;background:#d9dadd"></div>
<div class="a" style="left:1092px;top:716px;width:33px;height:1px;background:#55585d"></div>
<div class="a" style="left:1124px;top:710px;width:13px;height:13px;border:1.300px solid #3b3f45;border-radius:50%;background:#fff"></div>
<svg class="ic" style="left:1240px;top:711px;stroke-width:2;stroke:#2e3136" width="11" height="11" viewBox="0 0 11 11"><path d="M5.500 .5v10M.5 5.500h10"/></svg>
<div class="a" style="left:0;top:771px;width:118px;height:21px;background:#1c1e21"></div>
<svg style="left:4px;top:775px" width="14" height="13" viewBox="0 0 14 13"><rect x=".3" y="0" width="13" height="9" rx="1.200" fill="#fff"/><rect x="3.500" y="10.800" width="6.500" height="1.600" rx=".6" fill="#fff"/><path d="M4.500 6.500q.5-3 4-3v-1.500l2.500 2.300l-2.500 2.300v-1.500q-2.500-.2-4 1.400z" fill="#1c1e21"/></svg>
<svg style="left:22px;top:775px" width="12" height="14" viewBox="0 0 12 14"><rect x="3.500" y="0" width="5" height="8.500" rx="2.500" fill="#35d33c"/><path d="M1 6.500q0 4.500 5 4.500t5-4.500M6 11v2.200" fill="none" stroke="#fff" stroke-width="1.300" stroke-linecap="round"/></svg>
<div class="t" style="left:38.5px;top:772px;font-size:10.6px;color:#fff;font-weight:700;">王雪的屏幕共享</div>
<!-- video panel -->
<div class="a" style="left:1017px;top:58px;width:250px;height:213.500px;background:#2c2f33;border-radius:0 0 0 5px;box-shadow:0 1px 0 #1d1f22"></div>
<div class="a" style="left:1017px;top:58px;width:250px;height:32px;background:#393c41"></div>
<div class="a" style="left:1017px;top:90px;width:250px;height:2px;background:#1f2124"></div>
<svg style="left:1027px;top:67px" width="13" height="15" viewBox="0 0 13 15"><rect x="4" y="1" width="5" height="8" rx="2.500" fill="#85888c"/><path d="M2 7q0 4 4.500 4t4.500-4M6.500 11v2.500M4 13.800h5" fill="none" stroke="#85888c" stroke-width="1.100"/><path d="M.8 13.500l11.400-12" stroke="#e8453c" stroke-width="1.300"/></svg>
<div class="a" style="left:1047px;top:62px;width:1px;height:24px;background:#2a2c30"></div>
<div class="t" style="left:1058px;top:65px;font-size:11px;color:#fff;font-weight:700;letter-spacing:-.2px;">正在讲话: 王雪;</div>
<svg style="left:1240px;top:60px" width="27" height="28" viewBox="0 0 27 28"><defs><linearGradient id="dg" x1="0" y1="0" x2="1" y2="1"><stop offset="0" stop-color="#63666b"/><stop offset="1" stop-color="#45484d"/></linearGradient></defs><rect x="7.600" y="7.100" width="14.800" height="14.800" rx="1.500" transform="rotate(45 15 14.500)" fill="url(#dg)"/><rect x="21.100" y="7.100" width="14.800" height="14.800" rx="1.500" transform="rotate(45 28.500 14.500)" fill="url(#dg)"/></svg>
<div class="a" style="left:1111.500px;top:132px;width:86.500px;height:86.500px;border-radius:50%;background:#fff"></div>
<svg style="left:1104px;top:125px" width="100" height="100" viewBox="0 0 100 100">
<g fill="#fff" stroke="#3f3f3f" stroke-width="1.200" stroke-linecap="round" stroke-linejoin="round">
<path d="M37.300 41.500c-1.500-6 .5-11.800 5.200-11.800c4 0 6 4.500 6.200 9.500c1.200-.2 2.600-.3 3.600-.2c-.5-5.500 1.500-10.600 5.700-10.600c4.500 0 6.300 5.500 5.300 11.800c4 2 6.700 5.500 6.700 9.800c0 8-9 11.500-20 11.500c-12.500 0-20.300-4-20.300-11.500c0-4.200 3-7 7.600-8.500z"/>
<path d="M58.300 58.500c0-2 1.200-3 2.500-3.700c.8-.5 1.200-2 2-2.500c1.200-.3 1.500 1.200 1.200 2.800l1.800.2v6.200c-2.500 1-7.500 .5-7.500-3z"/>
</g>
<rect x="65.200" y="55.200" width="2.300" height="5.800" fill="#6e93c2" stroke="#4f6f9b" stroke-width=".5"/>
<circle cx="34.800" cy="52.600" r="3.600" fill="#f8c9bd"/>
<circle cx="44.200" cy="48.400" r="1.100" fill="#333"/>
<ellipse cx="50.500" cy="50" rx="1.200" ry=".8" fill="#333"/>
<path d="M57.300 46.200l-2.300 1.500l2.300 1.500" fill="none" stroke="#333" stroke-width=".9" stroke-linecap="round"/>
<path d="M62.500 48v1.500M64.800 48.500v1.500" stroke="#666" stroke-width=".6"/>
<path d="M72 33.200l1.400 2.900l3.200.4l-2.300 2.200l.6 3.200l-2.900-1.500l-2.900 1.500l.6-3.200l-2.300-2.200l3.200-.4z" fill="#a9c2e0" stroke="#5a7bab" stroke-width="1"/>
<path d="M72.200 53.800l1.800 2.500l-1.800 2.500l-1.800-2.500z" fill="#8fb0d6" stroke="#4f6f9b" stroke-width=".6"/>
<path d="M62.900 64l2.400 2.500l-2.400 2.500l-2.400-2.500z" fill="#fff" stroke="#444" stroke-width=".7"/>
<text x="37.500" y="69.200" font-family="'Liberation Sans',sans-serif" font-weight="700" font-size="6.400" letter-spacing="1.500" fill="#444">NICE</text>
<path d="M33.200 64.800h1.600M33.200 67h1.600" stroke="#444" stroke-width=".8"/>
</svg>
<div class="a" style="left:1019px;top:253px;width:48px;height:18px;background:#1c1e21"></div>
<svg style="left:1023px;top:255px" width="12" height="14" viewBox="0 0 12 14"><rect x="3.500" y="0" width="5" height="8.500" rx="2.500" fill="#3ddd44"/><path d="M1 6.500q0 4.500 5 4.500t5-4.500M6 11v2.200" fill="none" stroke="#fff" stroke-width="1.300" stroke-linecap="round"/></svg>
<div class="t" style="left:1040px;top:252px;font-size:10.6px;color:#fff;font-weight:700;">王雪</div>
<div class="a" style="left:18px;top:37px;width:74px;height:26.500px;border-radius:4.500px;background:rgba(26,26,28,.3)"></div>
<div class="a" style="left:24.700px;top:44.100px;width:12.600px;height:12.600px;border-radius:50%;border:1.300px solid #7c3032"></div>
<div class="a" style="left:27.500px;top:46.900px;width:7px;height:7px;border-radius:50%;background:#973737"></div>
<div class="t" style="left:48px;top:40.5px;font-size:10.5px;color:#cfd0d1;">录制中</div>
</body>
</html>
